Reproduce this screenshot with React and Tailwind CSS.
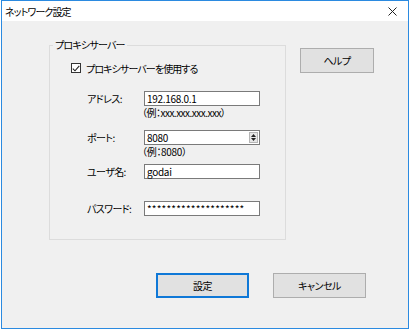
import React from 'react'

const jp = 'font-["Noto_Sans_CJK_JP","Noto_Sans",sans-serif] [font-feature-settings:"palt"_1]'

function Field({ children, spin }) {
  return (
    <div className="flex h-[15px] w-[116px] items-center justify-between border border-[#7a7a7a] bg-white pl-[2px] pr-px text-[10px] leading-none tracking-[-0.3px] text-black">
      <span>{children}</span>
      {spin && (
        <div className="flex h-[11px] w-[9px] flex-col items-center justify-center gap-px border border-[#b5b5b5] bg-[#e6e6e6]">
          <svg width="5" height="3" viewBox="0 0 5 3"><path d="M0 3 L2.5 0 L5 3 Z" fill="#222" /></svg>
          <svg width="5" height="3" viewBox="0 0 5 3"><path d="M0 0 L2.5 3 L5 0 Z" fill="#222" /></svg>
        </div>
      )}
    </div>
  )
}

function Row({ label, children }) {
  return (
    <div className="flex items-center">
      <div className="w-[57px] text-[10px] leading-none tracking-[-0.6px]">{label}</div>
      {children}
    </div>
  )
}

function Btn({ children, primary, className = '' }) {
  return (
    <div className={`flex h-[25px] items-center justify-center text-[10px] tracking-[-0.5px] ${primary ? 'border-2 border-[#0f78d7] bg-[#e1e1e1]' : 'border border-[#adadad] bg-[#e1e1e1]'} ${className}`}>
      {children}
    </div>
  )
}

export default function App() {
  return (
    <div className={`h-[332px] w-[411px] bg-white ${jp} text-black`}>
      <div className="ml-px flex h-[329px] w-[408px] flex-col border border-[#2b8ae0] bg-[#f0f0f0]">
        {/* title bar */}
        <div className="flex h-[20px] items-center justify-between bg-white pl-[3px] pr-[11px] text-[10px] tracking-[-0.9px]">
          <span>ネットワーク設定</span>
          <svg width="9" height="9" viewBox="0 0 9 9">
            <path d="M0.5 0.5 L8.5 8.5 M8.5 0.5 L0.5 8.5" stroke="#222" strokeWidth="1" />
          </svg>
        </div>

        <div className="pl-[47px] pt-[16px]">
          <div className="flex items-start">
            <fieldset className="h-[203px] w-[237px] border border-[#dcdcdc] pl-[21px]">
              <legend className="ml-[-18px] px-[2px] text-[10px] leading-[16px] tracking-[-0.8px]">プロキシサーバー</legend>

              <div className="mt-[7px] flex h-[16px] items-center gap-[5px] text-[10px] tracking-[-0.9px]">
                <div className="flex h-[10px] w-[10px] items-center justify-center border border-[#333] bg-white">
                  <svg width="8" height="7" viewBox="0 0 8 7">
                    <path d="M0.8 3.6 L3 5.8 L7.3 0.8" stroke="#222" strokeWidth="1.1" fill="none" />
                  </svg>
                </div>
                <span>プロキシサーバーを使用する</span>
              </div>

              <div className="pl-[16px]">
                <div className="mt-[15px]">
                  <Row label="アドレス:">
                    <Field>192.168.0.1</Field>
                  </Row>
                  <div className="pl-[55px] text-[10px] leading-[14px] tracking-[-0.5px]">（例：xxx.xxx.xxx.xxx）</div>
                </div>

                <div className="mt-[10px]">
                  <Row label="ポート:">
                    <Field spin>8080</Field>
                  </Row>
                  <div className="pl-[55px] text-[10px] leading-[13px] tracking-[-0.3px]">（例：8080）</div>
                </div>

                <div className="mt-[6px]">
                  <Row label="ユーザ名:">
                    <Field>godai</Field>
                  </Row>
                </div>

                <div className="mt-[22px]">
                  <Row label="パスワード:">
                    <Field><span className="tracking-[0.2px]">********************</span></Field>
                  </Row>
                </div>
              </div>
            </fieldset>

            <Btn className="ml-[14px] mt-[11px] w-[74px]">ヘルプ</Btn>
          </div>

          <div className="mt-[33px] flex gap-[24px] pl-[107px]">
            <Btn primary className="w-[93px]">設定</Btn>
            <Btn className="w-[93px]">キャンセル</Btn>
          </div>
        </div>
      </div>
    </div>
  )
}
